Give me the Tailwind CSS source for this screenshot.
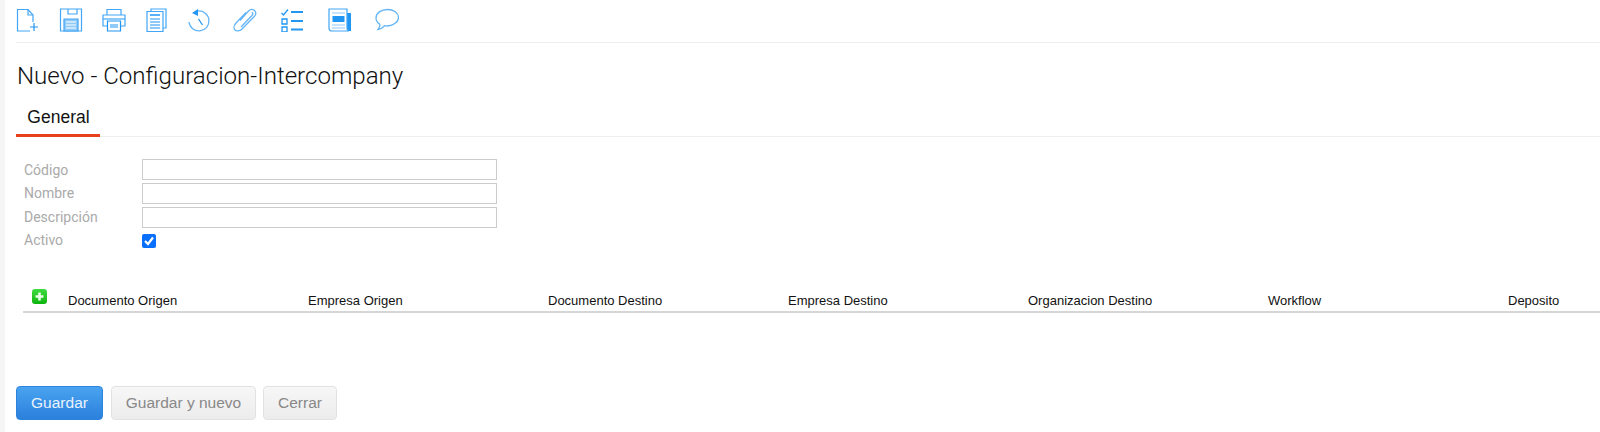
<!DOCTYPE html>
<html lang="en">
<head>
    <meta charset="UTF-8" />
    <title>Nuevo - Configuracion-Intercompany</title>
    <script src="https://cdn.jsdelivr.net/npm/@tailwindcss/browser@4"></script>
</head>
<body class="bg-white font-['Liberation_Sans',sans-serif] h-[432px] overflow-hidden">
<div class="flex h-[432px]">
    <div class="w-[5px] bg-[#f5f5f5] shrink-0"></div>
    <div class="flex-1 pl-[11px] min-w-0">
        <!-- toolbar -->
        <div class="h-[43px] border-b border-[#eeeeee] flex items-start pt-[8px] gap-[19px]">
            <svg class="w-[24px] h-[24px]" viewBox="0 0 24 24" fill="none" stroke="#42a5f5" stroke-width="1.2"><path d="M17 14V7l-5-5.500H1.500V23H14"/><path d="M12 1.500V7h5"/><path d="M18 15v8M14 19h8" stroke="#2196f3"/></svg>
            <svg class="w-[24px] h-[24px]" viewBox="0 0 24 24" fill="none" stroke="#42a5f5" stroke-width="1.2"><path d="M1.500 1h21v22h-21z"/><path d="M9 1v5h9V1"/><path d="M5 11h14v12H5z" fill="#90caf9"/><path d="M7 14h10M7 17h10M7 20h10" stroke="#fff"/></svg>
            <svg class="w-[24px] h-[24px]" viewBox="0 0 24 24" fill="none" stroke="#42a5f5" stroke-width="1.2"><path d="M5 7V1.500h14V7"/><path d="M5 18H1V7h22v11h-4"/><path d="M1 11h22"/><path d="M5.500 13h13v10h-13z" fill="#fff" stroke="#2196f3"/><path d="M8 16h8v4H8z" fill="#90caf9" stroke="none"/></svg>
            <svg class="w-[24px] h-[24px]" viewBox="0 0 24 24" fill="none" stroke="#42a5f5" stroke-width="1.2"><path d="M6 3V1h15v19h-3"/><path d="M2 3.500h16v20H2z" fill="#fff"/><path d="M5 7h10" stroke="#2196f3" stroke-width="1.500"/><path d="M5 11h10M5 14h10M5 17h10M5 20h10" stroke="#2196f3"/></svg>
            <svg class="w-[24px] h-[24px]" viewBox="0 0 24 24" fill="none" stroke="#64b5f6" stroke-width="1.300"><path d="M10 3a10 10 0 1 1-9 11"/><path d="M10 1v7L4 5z" fill="#2196f3" stroke="none"/><path d="M10.500 11l4 6" stroke="#2196f3"/></svg>
            <svg class="w-[24px] h-[24px] ml-[2px]" viewBox="0 0 24 24" fill="none" stroke="#64b5f6" stroke-width="1.300"><path d="M7 12.500L15.500 3c2-2 4.500-1.800 6-.5s2 3.700 0 5.700L9.500 20.500c-2.500 2.700-6 3-7.500 1.500s-1.200-4.500.8-6.800L13 4.500"/><path d="M8 19l11-11.500c1-1.200 1-2.500.2-3.300" /></svg>
            <svg class="w-[24px] h-[24px] ml-[4px]" viewBox="0 0 24 24" fill="none" stroke="#2196f3" stroke-width="1.300"><path d="M1.500 5l2 2L8 1.500"/><path d="M2 11h5v5H2zM2 19h5v5H2z"/><path d="M11 4h12M11 13h12M11 21.500h12" stroke-width="2"/></svg>
            <svg class="w-[24px] h-[24px] ml-[5px]" viewBox="0 0 24 24" fill="none" stroke="#42a5f5" stroke-width="1.200"><path d="M21 5v18" stroke-width="4" stroke="#2196f3"/><path d="M1 1h18v19c0 1.500 1 3 2 3H4c-2 0-3-1-3-3z" fill="#fff"/><path d="M4 5h13M4 17h13M4 20h13" stroke="#90caf9"/><path d="M4.500 8h12v6h-12z" fill="#2196f3" stroke="none"/></svg>
            <svg class="w-[24px] h-[24px] ml-[4px]" viewBox="0 0 24 24" fill="none" stroke="#64b5f6" stroke-width="1.300"><path d="M12.500 1.500C6 1.500 1 5 1 10c0 2.800 1.500 4.800 3.800 6.200.3 2-.8 4-1.800 5.300 2.500-.3 5-1.800 6.500-3.800 1 .2 2 .3 3 .3C18.500 17.500 23.500 14 23.500 9.500S18.500 1.500 12.500 1.500z"/></svg>
        </div>

        <h1 class="font-['Roboto',sans-serif] font-light text-[24.100px] leading-[32px] text-[#111] mt-[17px] ml-[1px]">Nuevo - Configuracion-Intercompany</h1>

        <!-- tabs -->
        <div class="mt-[13px] border-b border-[#eeeeee] h-[32px] flex">
            <div class="w-[84px] h-[32px] border-b-[3px] border-[#e8401c] text-center text-[17.500px] leading-[24px] text-[#111] pl-[1px]">General</div>
        </div>

        <!-- form -->
        <div class="mt-[22px] ml-[7px] font-['Roboto',sans-serif] text-[14px] text-[#aaaaaa] flex flex-col gap-[3px]">
            <div class="flex items-center h-[21px]"><label class="w-[119px] pl-[1px] pt-[1px]">Código</label><input class="w-[355px] h-[21px] border border-[#cccccc]" type="text"></div>
            <div class="flex items-center h-[21px]"><label class="w-[119px] pl-[1px]">Nombre</label><input class="w-[355px] h-[21px] border border-[#cccccc]" type="text"></div>
            <div class="flex items-center h-[21px]"><label class="w-[119px] pl-[1px]">Descripción</label><input class="w-[355px] h-[21px] border border-[#cccccc]" type="text"></div>
            <div class="flex items-center h-[21px] -mt-[1px]"><label class="w-[119px] pl-[1px]">Activo</label>
                <span class="w-[14px] h-[14px] rounded-[2px] bg-[#0b6ffd] flex items-center justify-center">
                    <svg class="w-[10px] h-[10px]" viewBox="0 0 10 10" fill="none" stroke="#fff" stroke-width="2.200"><path d="M1 5l3 3 5-6.500"/></svg>
                </span>
            </div>
        </div>

        <!-- grid -->
        <div class="mt-[37px] ml-[7px] h-[25px] border-b-2 border-[#d6d6d6] flex items-start text-[13px] text-[#111]">
            <div class="w-[45px] shrink-0 pl-[9px] pt-[1px]">
                <span class="w-[15px] h-[15px] rounded-[3px] bg-gradient-to-b from-[#3fdc3f] to-[#08b408] flex items-center justify-center">
                    <svg class="w-[9px] h-[9px]" viewBox="0 0 9 9" fill="none" stroke="#e6ffe6" stroke-width="2.600"><path d="M4.500 0.500v8M0.500 4.500h8"/></svg>
                </span>
            </div>
            <div class="w-[240px] shrink-0 pt-[3px]">Documento Origen</div>
            <div class="w-[240px] shrink-0 pt-[3px]">Empresa Origen</div>
            <div class="w-[240px] shrink-0 pt-[3px]">Documento Destino</div>
            <div class="w-[240px] shrink-0 pt-[3px]">Empresa Destino</div>
            <div class="w-[240px] shrink-0 pt-[3px]">Organizacion Destino</div>
            <div class="w-[240px] shrink-0 pt-[3px]">Workflow</div>
            <div class="w-[90px] shrink-0 pt-[3px]">Deposito</div>
        </div>

        <!-- buttons -->
        <div class="mt-[73px] flex gap-[8px] text-[15.500px]">
            <button class="w-[87px] h-[34px] rounded-[4px] border border-[#2a83dc] bg-gradient-to-b from-[#4aa3f0] to-[#2b80dc] text-[#e8f3fd]">Guardar</button>
            <button class="w-[145px] h-[34px] rounded-[4px] border border-[#e2e2e2] bg-gradient-to-b from-[#f7f7f7] to-[#ececec] text-[#888888]">Guardar y nuevo</button>
            <button class="w-[74px] h-[34px] -ml-[1px] rounded-[4px] border border-[#e2e2e2] bg-gradient-to-b from-[#f7f7f7] to-[#ececec] text-[#888888]">Cerrar</button>
        </div>
    </div>
</div>
</body>
</html>
